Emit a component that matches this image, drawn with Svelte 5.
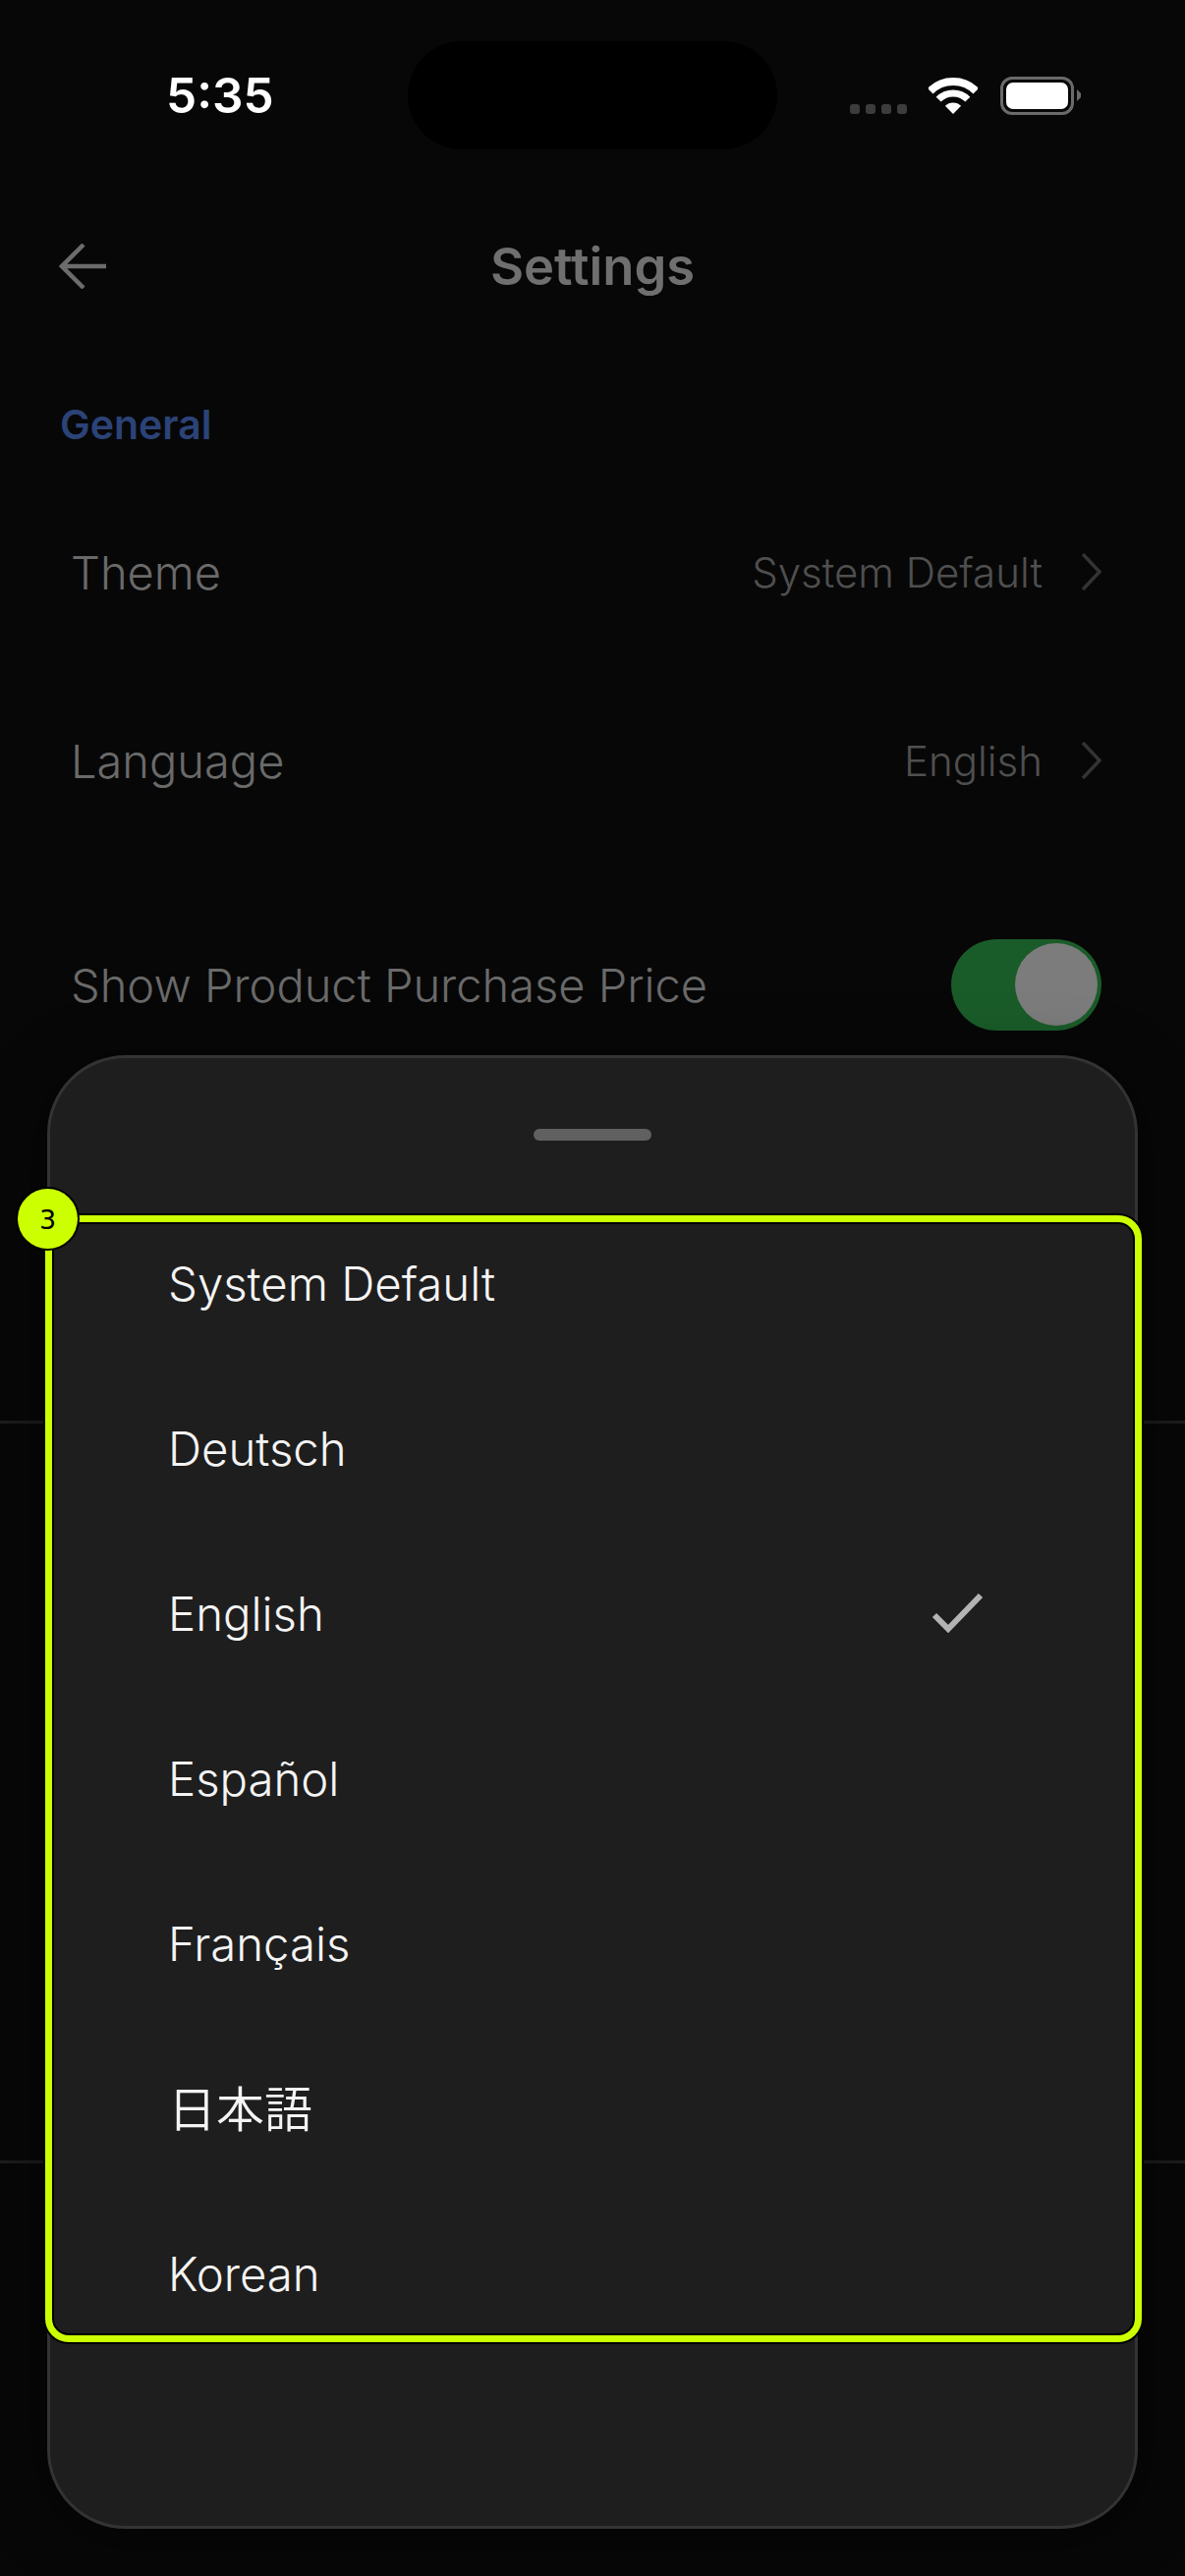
<script>
    const languages = ["System Default", "Deutsch", "English", "Español", "Français", "日本語", "Korean"];
    const selected = "English";
</script>

<div class="screen">
    <div class="status">
        <span class="time">5:35</span>
        <div class="island"></div>
        <div class="status-icons">
            <div class="signal">
                <i></i><i></i><i></i><i></i>
            </div>
            <svg class="wifi" width="50" height="37" viewBox="0 0 50 37">
                <path d="M1.7 13.7 A33 33 0 0 1 48.3 13.7" fill="none" stroke="#fff" stroke-width="8" />
                <path d="M10.15 22.15 A21 21 0 0 1 39.85 22.15" fill="none" stroke="#fff" stroke-width="7" />
                <path d="M25 37 L16.87 28.87 A11.5 11.5 0 0 1 33.13 28.87 Z" fill="#fff" />
            </svg>
            <div class="battery"><div class="battery-fill"></div></div>
            <svg class="battery-cap" width="4" height="12" viewBox="0 0 4 12">
                <path d="M0 0 L4 4 V8 L0 12 Z" fill="#6a6a6a" />
            </svg>
        </div>
    </div>

    <header>
        <svg class="back" width="48" height="46" viewBox="0 0 48 46">
            <path d="M48 23 H3 M25 1 L3 23 L25 45" fill="none" stroke="#6c6c6c" stroke-width="4.5" />
        </svg>
        <h1>Settings</h1>
    </header>

    <h2>General</h2>

    <div class="rows">
        <div class="row">
            <span class="label">Theme</span>
            <span class="value">System Default</span>
            <svg width="21" height="38" viewBox="0 0 21 38">
                <path d="M2 1 L19 19 L2 37" fill="none" stroke="#333" stroke-width="3.5" />
            </svg>
        </div>
        <div class="row">
            <span class="label">Language</span>
            <span class="value">English</span>
            <svg width="21" height="38" viewBox="0 0 21 38">
                <path d="M2 1 L19 19 L2 37" fill="none" stroke="#333" stroke-width="3.5" />
            </svg>
        </div>
        <div class="row toggle-row">
            <span class="label">Show Product Purchase Price</span>
            <div class="toggle"><div class="knob"></div></div>
        </div>
    </div>

    <div class="divider first"></div>
    <div class="divider second"></div>

    <div class="sheet">
        <div class="handle"></div>
        <div class="highlight">
            <span class="badge">3</span>
            <div class="options">
                {#each languages as lang}
                    <div class="option">
                        <span class:cjk={lang === "日本語"}>{lang}</span>
                        {#if lang === selected}
                            <svg width="54" height="40" viewBox="0 0 54 40">
                                <path d="M3 22 L17 36 L50 2" fill="none" stroke="#b4b4b4" stroke-width="6" />
                            </svg>
                        {/if}
                    </div>
                {/each}
            </div>
        </div>
    </div>
</div>

<style>
    :global(body) {
        margin: 0;
        background: #070707;
    }

    .screen {
        position: relative;
        width: 1206px;
        height: 2622px;
        overflow: hidden;
        background: #070707;
        font-family: Inter, "Noto Sans CJK JP", sans-serif;
    }

    .status {
        display: flex;
        align-items: center;
        height: 110px;
        padding-top: 42px;
    }

    .time {
        width: 415px;
        padding-left: 169px;
        box-sizing: border-box;
        color: #fff;
        font-size: 49.5px;
        font-weight: 600;
        line-height: 110px;
    }

    .island {
        width: 376px;
        height: 110px;
        border-radius: 56px;
        background: #000;
    }

    .status-icons {
        display: flex;
        align-items: center;
        padding-left: 74px;
    }

    .signal {
        display: flex;
        gap: 6px;
        margin-top: 28px;
        margin-right: 22px;
    }

    .signal i {
        width: 10px;
        height: 10px;
        border-radius: 3px;
        background: #3c3c3c;
    }

    .wifi {
        margin-right: 23px;
    }

    .battery {
        width: 75px;
        height: 39px;
        padding: 3px;
        box-sizing: border-box;
        border: 3px solid #6a6a6a;
        border-radius: 12px;
    }

    .battery-fill {
        height: 100%;
        border-radius: 7px;
        background: #fff;
    }

    .battery-cap {
        margin-left: 3px;
    }

    header {
        position: relative;
        display: flex;
        justify-content: center;
        align-items: center;
        margin-top: 87px;
        height: 64px;
    }

    .back {
        position: absolute;
        left: 60px;
        top: 9px;
    }

    h1 {
        margin: 0;
        color: #6f6f6f;
        font-size: 52.5px;
        font-weight: 600;
    }

    h2 {
        margin: 107px 0 0 61px;
        color: #2b4377;
        font-size: 41px;
        font-weight: 600;
        line-height: 44px;
    }

    .rows {
        display: flex;
        flex-direction: column;
        margin: 98px 85px 0 72px;
    }

    .row {
        display: flex;
        align-items: center;
        height: 60px;
        margin-bottom: 132px;
    }

    .toggle-row {
        margin-top: 36px;
    }

    .label {
        flex: 1;
        color: #6a6a6a;
        font-size: 47px;
        font-weight: 350;
    }

    .value {
        color: #4f4f4f;
        font-size: 42px;
        font-weight: 350;
        margin-right: 39px;
    }

    .toggle {
        width: 153px;
        height: 93px;
        flex: none;
        display: flex;
        justify-content: flex-end;
        align-items: center;
        padding-right: 4px;
        box-sizing: border-box;
        border-radius: 47px;
        background: #1a5c29;
    }

    .knob {
        width: 84px;
        height: 84px;
        border-radius: 50%;
        background: #7c7c7c;
    }

    .divider {
        position: absolute;
        left: 0;
        right: 0;
        height: 3px;
        background: #1c1c1c;
    }

    .divider.first {
        top: 1446px;
    }

    .divider.second {
        top: 2199px;
    }

    .sheet {
        position: absolute;
        left: 48px;
        top: 1074px;
        width: 1110px;
        height: 1500px;
        box-sizing: border-box;
        border: 3px solid #333;
        border-radius: 80px;
        background: #1e1e1e;
        box-shadow: 0 8px 60px rgba(0, 0, 0, 0.5);
    }

    .handle {
        width: 120px;
        height: 12px;
        margin: 72px auto 0;
        border-radius: 6px;
        background: #606060;
    }

    .highlight {
        position: absolute;
        left: -5px;
        top: 160px;
        width: 1116px;
        height: 1147px;
        box-sizing: border-box;
        border: 7px solid #cf0;
        border-radius: 24px;
        box-shadow: 0 0 0 2px #000, inset 0 0 0 2px #000;
        padding: 0 153px 0 118px;
    }

    .badge {
        position: absolute;
        left: -35px;
        top: -34px;
        width: 61px;
        height: 61px;
        padding-top: 2px;
        box-sizing: border-box;
        display: flex;
        justify-content: center;
        align-items: center;
        border-radius: 50%;
        background: #cf0;
        box-shadow: 0 0 0 2px #000;
        color: #000;
        font-family: "DejaVu Sans", sans-serif;
        font-size: 27px;
    }

    .options {
        margin-top: -22px;
    }

    .option {
        display: flex;
        justify-content: space-between;
        align-items: center;
        height: 168px;
        color: #f4f4f4;
        font-size: 47.3px;
        font-weight: 350;
    }

    .cjk {
        margin-bottom: 6px;
        font-size: 49px;
    }
</style>
